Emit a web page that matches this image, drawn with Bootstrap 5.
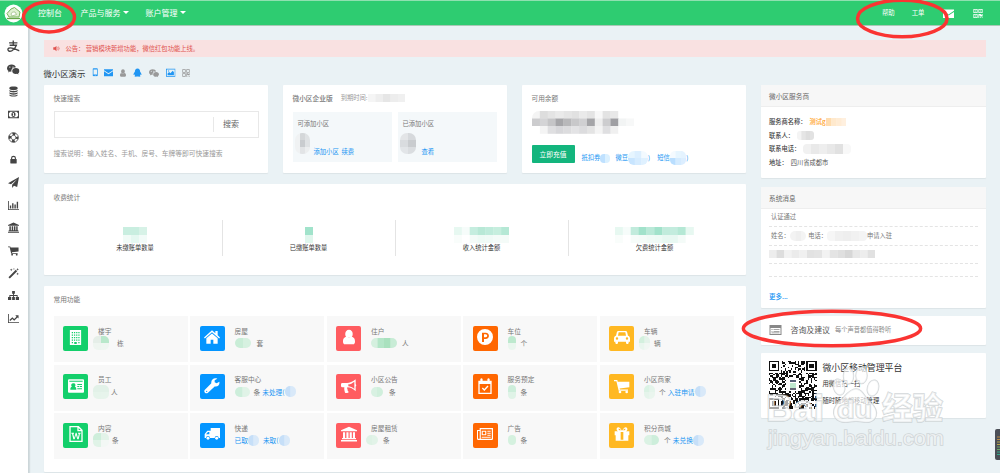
<!DOCTYPE html>
<html lang="en">
<head>
<meta charset="utf-8">
<meta name="viewport" content="width=device-width, initial-scale=1">
<title>微小区演示</title>
<link rel="stylesheet" href="https://cdn.jsdelivr.net/npm/bootstrap@5.3.0/dist/css/bootstrap.min.css">
<style>
body{height:473px;overflow:hidden;background:#eaf2f5;font-family:"Noto Sans CJK SC",sans-serif;font-size:6.7px;line-height:10px;color:#777;position:relative;white-space:nowrap}
a.lk,a.lk:hover{color:#2196f3;text-decoration:none}
svg{display:block;flex:none}
.ic{width:11px;height:11px;fill:currentColor}
.topbar{height:26px;background:#2ecc71;border-top:1px solid #8fe0b0;border-bottom:1px solid #a9c9b6;padding:0;color:#fff;font-size:8px;line-height:12px}
.topbar .brand-pic{width:19px;height:19px;margin-left:4px}
.topbar .nav-entry{color:#fff;text-decoration:none;margin-top:-1px}
.topbar .right-nav{font-size:6.4px;margin-left:auto;padding-right:17px}
.caret{border:3px solid transparent;border-top:3px solid #fff;border-bottom:0;display:inline-block;margin-left:2px;vertical-align:1.5px}
.side{width:29px;height:447px;background:#fff;border-right:1px solid #ccd6d9;box-shadow:1px 0 1px #d4dde0;padding-top:9px;color:#444;flex:none}
.side div{height:22.7px;display:flex;align-items:center;justify-content:center;padding-right:1px}
.content{padding:14px 14px 0 14.5px;min-width:0}
.notice{height:17px;background:#f9e1e1;color:#e0524e;font-size:6.3px;padding:0 0 0 9px;margin:0;border:0;border-radius:0}
.site-title{height:14px;margin:8.5px 0 5.5px;color:#333;font-size:8.4px;line-height:14px}
.card{border:0;border-radius:1px;box-shadow:0 1px 1px #dce4e7;color:inherit}
.left-col{width:702px;flex:none}
.right-col{width:225px;flex:none}
.h-top{height:88px}
.card.pad{padding:8px 10px 0}
.search-box{height:27px;border:1px solid #e8e8e8;margin-top:8px;width:205px;font-size:8px;color:#666}
.search-box span{border-left:1px solid #e8e8e8;height:15px;line-height:14px;width:45px;padding-left:9.5px}
.quota{height:50px;width:99.5px;background:#f4f8fa;padding:7px 0 0 5px;margin-top:9px}
.quota .links{color:#2196f3;font-size:6.3px}
.recharge{background:#13b57d;color:#fff;border-radius:1px;width:43px;height:18px;padding:0;font-size:6.8px;line-height:18px;border:0}
.recharge:hover{background:#13b57d;color:#fff}
.stats{height:91px}
.stat-row{margin:18px -5px 0;height:36px}
.stat-row>div{width:173.2px;padding-top:7px;color:#333;font-size:6.25px;border-left:1px solid #e4e4e4}
.stat-row>div:first-child{border-left:0}
.stat-row svg{margin:0 auto}
.funcs{height:186px}
.fgrid{display:grid;grid-template-columns:repeat(5,134.4px);gap:2.5px 2.15px;margin-top:12px}
.fcell{height:46px;background:#f8f8f8;padding:9.5px 0 0 9.7px;color:#777}
.tile{width:25px;height:25px;border-radius:2px;color:#fff;margin-right:9.8px;padding-bottom:2px;flex:none}
.tile .ic{width:16px;height:16px}
.g{background:#13cf6b}.b{background:#0495ff}.r{background:#ff5c60}.o{background:#ff6701}.y{background:#ffb822}
.fcell .line2{height:14px;margin-top:.5px;margin-left:-5px}
.card .head-bar{height:22px;background:#f7f7f7;border-bottom:1px solid #eee;padding:6px 8px;color:#666}
.info{padding:8px 8px 0;font-size:6.25px;color:#555}
.info>div{height:13.8px}
.info b{color:#444;font-weight:500;margin-right:3px}
.msgs{padding:0 8px;font-size:6.25px}
.msgs>div{border-bottom:1px dashed #e4e4e4;height:18.6px;padding-left:2px}
.qr{width:47.5px;height:47.5px}
.over{position:absolute;left:0;top:0;pointer-events:none}
.meter{position:absolute;right:0;top:429px}
</style>
</head>
<body>
<svg width="0" height="0" class="position-absolute">
<symbol id="alipay" viewBox="0 0 24 24"><path d="M4 5.500h16M12 1v9M5 10h13c-2 6-5 9-9 11-5 2-8-1-7-4 2-4 12-1 22 4" fill="none" stroke="currentColor" stroke-width="2.600"/></symbol>
<symbol id="wechat" viewBox="0 0 24 24"><path fill-rule="evenodd" d="M9 3C4 3 0 6 0 10c0 2 1 4 3 5.300L2 18l3.500-1.600 3 .6C7.500 12 11 8.500 17 8.200 16 5 13 3 9 3zM5.500 6.500a1.200 1.200 0 1 1 0 2.500 1.200 1.200 0 0 1 0-2.500zm6 0a1.200 1.200 0 1 1 0 2.500 1.200 1.200 0 0 1 0-2.500zM17 9.500c-4 0-7 2.500-7 5.800S13 21 17 21l2.300-.4L22 22l-.7-2.300c1.700-1 2.700-2.700 2.700-4.500 0-3.200-3-5.700-7-5.700z"/></symbol>
<symbol id="db" viewBox="0 0 24 24"><path d="M3 4c0-4 18-4 18 0v2c0 4-18 4-18 0zM3 8.500c3 3 15 3 18 0V11c0 4-18 4-18 0zM3 13.500c3 3 15 3 18 0V16c0 4-18 4-18 0zM3 18.500c3 3 15 3 18 0V20c0 4-18 4-18 0z"/></symbol>
<symbol id="money" viewBox="0 0 24 24"><path fill-rule="evenodd" d="M0 4h24v16H0zM2 9v6l3 3h14l3-3V9l-3-3H5zm10-2.500c6 0 6 11 0 11s-6-11 0-11zM10 9v1.500h1V14h-1v1.500h4V14h-1V8.500z"/></symbol>
<symbol id="ring" viewBox="0 0 24 24"><circle cx="12" cy="12" r="10.500" fill="none" stroke="currentColor" stroke-width="1.700"/><circle cx="12" cy="12" r="5" fill="none" stroke="currentColor" stroke-width="1.500"/><circle cx="12" cy="12" r="7.800" fill="none" stroke="currentColor" stroke-width="5.500" stroke-dasharray="6.250 6" stroke-dashoffset="3.100"/></symbol>
<symbol id="lock" viewBox="0 0 24 24"><path d="M7 11V8c0-6 10-6 10 0v3" fill="none" stroke="currentColor" stroke-width="3"/><rect x="3.500" y="10.500" width="17" height="12" rx="1"/></symbol>
<symbol id="plane" viewBox="0 0 24 24"><path d="M24 0 20 22l-7-3-4 5v-7L20 5 6.500 16 0 13.500z"/></symbol>
<symbol id="bars" viewBox="0 0 24 24"><path d="M0 2h1.800v18H24v2H0zM4 12h3v6.500H4zM9 7h3v11.500H9zM14 10h3v8.500h-3zM19 4h3v14.500h-3z"/></symbol>
<symbol id="bank" viewBox="0 0 24 24"><path d="M12 1 24 6.500V8H0V6.500zM3 9.500h3.200V18h1.900V9.500h3.200V18h1.700V9.500h3.200V18h1.700V9.500H21V18h1.500v2h-21v-2H3zM0 21h24v2.200H0z"/></symbol>
<symbol id="cart" viewBox="0 0 24 24"><path d="M0 3h5l.6 2.500H23V14L8.500 15.700l.4 1.600H21v2H7L3.600 5H0z"/><circle cx="9" cy="21" r="2"/><circle cx="19" cy="21" r="2"/></symbol>
<symbol id="wand" viewBox="0 0 24 24"><path d="M1 20 17 4l3 3L4 23zM7 1l.8 2.200L10 4l-2.200.8L7 7l-.8-2.200L4 4l2.200-.8zM21 10l.8 2.200 2.200.8-2.200.8L21 16l-.8-2.200L18 13l2.200-.8zM21 0l.8 2.200L24 3l-2.200.8L21 6l-.8-2.200L18 3l2.200-.8zM13 0l.5 1.500L15 2l-1.500.5L13 4l-.5-1.500L11 2l1.500-.5z"/></symbol>
<symbol id="tree" viewBox="0 0 24 24"><path d="M9 2h6v6h-2v3h8v4h3v7h-7v-7h2v-2h-6v2h2v7H9v-7h2v-2H5v2h2v7H0v-7h3v-4h8V8H9z"/></symbol>
<symbol id="trend" viewBox="0 0 24 24"><path d="M0 2h1.800v18H24v2H0zM16 5h7v7l-2.300-2.300-7.200 7.300-4-4L5 17.500 3 15.500l6.500-6.500 4 4 5-5z"/></symbol>
<symbol id="phone" viewBox="0 0 24 24"><path fill-rule="evenodd" d="M7 1h10q2 0 2 2v18q0 2-2 2H7q-2 0-2-2V3q0-2 2-2zm0 3v14h10V4zm4 15.500v1.800h2v-1.800z"/></symbol>
<symbol id="mail" viewBox="0 0 24 24"><path d="M0 3h24v3l-12 8L0 6zM0 8.500l12 8 12-8V22H0z"/></symbol>
<symbol id="person" viewBox="0 0 24 24"><path d="M12 1c7 0 7 11 2.500 12h-5C5 12 5 1 12 1zM8 12q4 3 8 0c4 0 5 4 5 7 0 2-1 4-3 4H6c-2 0-3-2-3-4 0-3 1-7 5-7z"/></symbol>
<symbol id="qq" viewBox="0 0 24 24"><path d="M12 1c5 0 7 4 7 9 2 2 4 6 3.500 8.500-.5.8-1.500-.5-2.300-1.700-.4 1.300-1 2.200-1.700 3 3 1.500 1.500 3.200-2 3.200-2 0-3.500-.5-4.500-.5-1 0-2.500.5-4.500.5-3.500 0-5-1.700-2-3.200-.7-.8-1.300-1.700-1.700-3C3 18 2 19.300 1.500 18.500 1 16 3 12 5 10c0-5 2-9 7-9z"/></symbol>
<symbol id="pic" viewBox="0 0 24 24"><path fill-rule="evenodd" d="M0 2h24v20H0zM2 4v16h20V4zM4 18v-4l4-4 3 3 6-6 3 4v7zM5 6h3v3H5z"/></symbol>
<symbol id="qrs" viewBox="0 0 24 24"><path fill-rule="evenodd" d="M1 1h10v10H1zm2 2v6h6V3zm2 2h2v2H5zM13 1h10v10H13zm2 2v6h6V3zm2 2h2v2h-2zM1 13h10v10H1zm2 2v6h6v-6zm2 2h2v2H5zM13 13h6v2h2v-2h2v6h-6v-2h-2v6h-2zM17 21h2v2h-2zM21 21h2v2h-2z"/></symbol>
<symbol id="horn" viewBox="0 0 24 24"><path d="M1 8h5l6-5v18l-6-5H1z"/><path d="M15 8q4 4 0 8M18 5q7 7 0 14" fill="none" stroke="currentColor" stroke-width="2"/></symbol>
<symbol id="build" viewBox="0 0 24 24"><path fill-rule="evenodd" d="M3 0h18v24H3zM6 3v2h2V3zm3.500 0v2h2V3zm3.500 0v2h2V3zm3.500 0v2h2V3zM6 7v2h2V7zm3.500 0v2h2V7zM13 7v2h2V7zm3.500 0v2h2V7zM6 11v2h2v-2zm3.500 0v2h2v-2zm3.500 0v2h2v-2zm3.500 0v2h2v-2zM6 15v2h2v-2zm3.500 0v2h2v-2zm3.500 0v2h2v-2zm3.500 0v2h2v-2zM6 19v2h2v-2zm4 0v3.500h4V19zm6.500 0v2h2v-2z"/></symbol>
<symbol id="home" viewBox="0 0 24 24"><path d="M12 2l5 4.500V3h3.500v6.500L24 12.700l-1.300 1.500L12 5 1.300 14.200 0 12.700zM12 6.800l8.500 7.200v8H14v-6h-4v6H3.500v-8z"/></symbol>
<symbol id="idcard" viewBox="0 0 24 24"><path fill-rule="evenodd" d="M1.500 2h21Q24 2 24 3.500v17q0 1.500-1.500 1.500h-21Q0 22 0 20.500v-17Q0 2 1.500 2zM2 4v1.500h20V4zm1.500 13.500h9c0-3-1-4-2.300-4.300 2-2.200 1-5.200-2.200-5.200s-4.200 3-2.200 5.200c-1.300.3-2.300 1.300-2.300 4.300zM14 9v1.500h7V9zm0 3v1.500h3V12zm4 0v1.500h3V12zm-4 3.500V17h7v-1.500z"/></symbol>
<symbol id="wrench" viewBox="0 0 24 24"><path fill-rule="evenodd" d="M23 5.500 19 8l-3-1.500V3.500L20 1c-5-2-10 1.500-9 7L1 18c-2 3 2 6.500 5 4L16 12.700c5 1 8-3 7-7.200zM4 19a1 1 0 1 1 0 2 1 1 0 0 1 0-2z"/></symbol>
<symbol id="bull" viewBox="0 0 24 24"><path fill-rule="evenodd" d="M22 2v7q2 2 0 4v7c-4-4-8-6-12.500-6-1 2 1 3 .5 5 1 .6.700 1 1.700 2-1.300 2-4.200 2-5.700 1-.7-2.500-1.500-5-1-8H2q-2 0-2-2V9.500q0-2 2-2h7C13 7.500 17 6 22 2zM20 5.500c-3 2.500-6 3.700-9 4v3c3 .3 6 1.600 9 4z"/></symbol>
<symbol id="word" viewBox="0 0 24 24"><path fill-rule="evenodd" d="M2 0h14l6 6v18H2zm2 2v20h16V8h-6V2zm12 1v3h3zM5 10h4v1.500H8l1.300 6L11.500 10h1.400l2 7.500 1.300-6H15V10h4v1.500h-1L16 20h-2l-2-6.500L10 20H8L6 11.500H5z"/></symbol>
<symbol id="truck" viewBox="0 0 24 24"><path fill-rule="evenodd" d="M10 3h14v15h-2a3 3 0 0 0-6 0H9a3 3 0 0 0-6 0H1V12l4-5h5zM8 9H6l-3 3.500h5z"/><circle cx="6" cy="18.500" r="2.200"/><circle cx="19" cy="18.500" r="2.200"/></symbol>
<symbol id="park" viewBox="0 0 24 24"><path fill-rule="evenodd" d="M12 0a12 12 0 1 1 0 24 12 12 0 0 1 0-24zM7.500 5.500v14h3V15H13c6.500 0 6.500-9.500 0-9.500zm3 2.500H13c3 0 3 4.500 0 4.500h-2.500z"/></symbol>
<symbol id="cal" viewBox="0 0 24 24"><path fill-rule="evenodd" d="M2 4h3V1.500q1.700-2 3.400 0V4h7.200V1.500q1.700-2 3.400 0V4h3v20H2zm2 5v13h16V9z"/><path d="m8 15 3 3 5.500-6" fill="none" stroke="currentColor" stroke-width="2"/></symbol>
<symbol id="news" viewBox="0 0 24 24"><path fill-rule="evenodd" d="M4 3h20v16q0 2-2 2H2q-2 0-2-2V6h4zm1.700 1.700V19h16.500V4.700zM1.500 7.500V19H4V7.500zM7 7h7v7H7zm1.700 1.700v3.600h3.600V8.700zM15.500 7h5v1.500h-5zm0 3h5v1.500h-5zm0 3h5v1.500h-5zM7 16h13.500v1.500H7z"/></symbol>
<symbol id="car" viewBox="0 0 24 24"><path fill-rule="evenodd" d="M7 3h10c2 0 2.500 1 3 3l1 4c2 .5 3 2 3 4v5h-2v1.500c0 2.500-4 2.500-4 0V19H6v1.500c0 2.500-4 2.500-4 0V19H0v-5c0-2 1-3.500 3-4l1-4c.5-2 1-3 3-3zm0 2L6 10h12l-1-5zM4.500 12.500a1.800 1.800 0 1 0 0 3.600 1.800 1.800 0 0 0 0-3.600zm15 0a1.800 1.800 0 1 0 0 3.600 1.800 1.800 0 0 0 0-3.600z"/></symbol>
<symbol id="gift" viewBox="0 0 24 24"><path fill-rule="evenodd" d="M1 8h7C1 8 4-1 9 3l3 4 3-4c5-4 8 5 1 5h7v6h-1.500v8h-19v-8H1zm7-1.800h2.500C8 2.500 5 4 8 6.200zm8 0c3-2.200 0-3.700-2.500 0zM10 9v11.500h4V9z"/></symbol>
<symbol id="board" viewBox="0 0 24 24"><path fill-rule="evenodd" d="M0 2h24v20H0zM2 8v12h20V8zM4 10h2v2H4zm4 0h12v1.500H8zM4 14h2v1.500H4zm4 0h12v1.500H8zM4 17h16v1.500H4z"/></symbol>
</svg>

<nav class="topbar navbar navbar-expand flex-nowrap align-items-center justify-content-start">
  <svg class="brand-pic" viewBox="0 0 19 19"><circle cx="9.500" cy="9.500" r="9" fill="#fff"/><path d="M3 9.500 7 5l3.500-1.500L16 8l-1 5H5z" fill="#dff0d2" stroke="#77b55a" stroke-width="1"/><path d="M7 10q1-3 4-2l1.500 2.500L8 12z" fill="#fff" stroke="#91b877" stroke-width=".7"/><path d="M3 14.500h13" stroke="#67a647" stroke-width="1.300"/></svg>
  <a class="nav-entry" style="margin-left:15px">控制台</a>
  <a class="nav-entry" style="margin-left:18.500px">产品与服务<i class="caret"></i></a>
  <a class="nav-entry" style="margin-left:17px">账户管理<i class="caret"></i></a>
  <div class="right-nav d-flex align-items-center">
    <a class="nav-entry">帮助</a><a class="nav-entry" style="margin-left:17px">工单</a>
    <svg class="ic" style="margin-left:18.500px"><use href="#mail"/></svg><svg class="ic" style="margin-left:19px;width:10px"><use href="#qrs"/></svg>
  </div>
</nav>

<div class="d-flex">
  <aside class="side" id="side"></aside>
  <main class="content flex-grow-1">
    <div class="notice alert d-flex align-items-center"><svg class="ic" style="width:7px;height:7px;margin-right:6px"><use href="#horn"/></svg>公告：&nbsp;营销模块新增功能，微信红包功能上线。</div>
    <div class="site-title d-flex align-items-center">微小区演示
      <div class="d-flex align-items-center" id="badges"></div>
    </div>
    <div class="d-flex justify-content-between">
      <div class="left-col">
        <div class="d-flex justify-content-between">
          <section class="card pad h-top" style="width:224px">
            <div>快速搜索</div>
            <div class="search-box d-flex justify-content-end align-items-center"><span>搜索</span></div>
            <div style="margin-top:9.500px;color:#999;font-size:6.780px">搜索说明：输入姓名、手机、房号、车牌等即可快速搜索</div>
          </section>
          <section class="card pad h-top" style="width:224px">
            <div class="d-flex align-items-center"><span class="fw-medium">微小区企业版</span><span style="margin-left:8px;font-size:6.300px;color:#999">到期时间:</span><i class="mz" data-c="f5f5f5,eeeeee,e6e6e6,ededed,f0f0f0" data-w="7.500" data-h="8"></i></div>
            <div class="d-flex justify-content-between" style="width:204.500px">
              <div class="quota"><div style="font-size:6.300px">可添加小区</div>
                <div class="d-flex align-items-center" style="margin-left:-3px"><i class="mz" data-c="f0f2f3,d4d7d9,dfe2e4/f0f2f3,c9cccf,dfe2e4/f0f2f3,e2e4e6,eceeef" data-w="5" data-h="7" data-r="7"></i><span class="links" style="padding-top:18px;margin-left:4px">添加小区&nbsp; 续费</span></div></div>
              <div class="quota"><div style="font-size:6.300px">已添加小区</div>
                <div class="d-flex align-items-center" style="margin-left:-3px"><i class="mz" data-c="e3e5e7,d6d9dc/d9dcdf,c9cccf/e2e5e8,dadde0" data-w="8" data-h="7" data-r="7"></i><span class="links" style="padding-top:18px;margin-left:6px">查看</span></div></div>
            </div>
          </section>
          <section class="card pad h-top" style="width:224px">
            <div>可用余额</div>
            <div style="margin-top:8px"><i class="mz" data-c="f4f4f4,dddddd,e4e4e4,eaeaea,e5e5e5,e1e1e1,eaeaea,e4e4e4,f8f8f8,e3e3e3,e8e8e8,ffffff,ffffff/ccccce,d4d4d6,c5c5c7,a6a6a9,b8b8ba,c8c8ca,d0d0d2,a5a5a8,eeeeee,cdcdcf,9f9fa3,f2f4f4,f7f8f8/ffffff,f4f4f4,dfdfe1,d7d7da,dcdcde,e3e3e5,dcdcde,e4e4e4,f4f4f4,dfdfe1,f0f0f0,ffffff,ffffff" data-w="7.850" data-h="7.500" data-r="7"></i></div>
            <div class="d-flex" style="margin-top:11.500px"><button class="btn recharge">立即充值</button>
              <div class="d-flex align-items-center" style="margin:6px 0 0 7px;font-size:6.300px;color:#2196f3">抵扣券<i class="mz" data-c="bfe1ff,daf0ff" data-w="5" data-h="9" data-r="4"></i><span style="margin-left:5px">微豆</span><i class="mz" data-c="e6f5ff,dcefff,f3faff/c8e5ff,d6ecff,dff1ff" data-w="6.700" data-h="7" data-r="6"></i>)<span style="margin-left:7px">短信</span><i class="mz" data-c="f4faff,e6f5ff,e4f3ff/b9deff,d4ebff,dceeff" data-w="5.500" data-h="7" data-r="5"></i>)</div></div>
          </section>
        </div>
        <section class="card pad stats" style="margin-top:11px">
          <div>收费统计</div>
          <div class="stat-row d-flex text-center">
            <div><i class="mz" data-c="c9eee0,c9eee0,d7f2e7/f1fbf7,e5f8f1,f2fbf8" data-w="8" data-h="8"></i><div>未缴账单数量</div></div>
            <div><i class="mz" data-c="a1e3cb/e0f6ed" data-w="8" data-h="8"></i><div>已缴账单数量</div></div>
            <div><i class="mz" data-c="e7f8f1,f6fcfa,c5eddf,b8e8d6,bfebdb,c6eede,b5e8d5/f9fdfb,ffffff,f4fbf8,eefaf5,f0faf6,f4fbf8,f4fbf8" data-w="7.850" data-h="8"></i><div>收入统计金额</div></div>
            <div><i class="mz" data-c="e7f8f1,f6fcfa,c1ebdc,a2e2cb,bae9d8,a2e2cb,c1ebdc,c3ecde,b5e8d5,e7f8f1/f9fdfb,ffffff,f6fcf9,f4fbf8,f0faf6,eefaf5,e8f8f2,e8f8f2,f4fbf8,ffffff" data-w="7.850" data-h="8"></i><div>欠费统计金额</div></div>
          </div>
        </section>
        <section class="card pad funcs" style="margin-top:11px">
          <div>常用功能</div>
          <div class="fgrid" id="fgrid"></div>
        </section>
      </div>
      <div class="right-col">
        <section class="card" style="height:93px">
          <div class="head-bar">微小区服务商</div>
          <div class="info">
            <div class="d-flex align-items-center"><b>服务商名称：</b><span style="color:#ff9e1b;font-weight:500">测试g</span><i class="mz" data-c="ffdcae,ffe9cd,ffecd5,fff0df" data-w="5.200" data-h="8"></i></div>
            <div class="d-flex align-items-center"><b>联系人：</b><i class="mz" data-c="f4f4f4,e5e5e5,dedede,e2e2e2" data-w="4.300" data-h="9" data-r="3"></i></div>
            <div class="d-flex align-items-center"><b>联系电话：</b><i class="mz" data-c="f1f1f1,e9e9e9,eeeeee,e8e8e8,e1e1e1,f8f8f8" data-w="8" data-h="10" data-r="4"></i></div>
            <div class="d-flex align-items-center"><b>地址：</b>四川省成都市</div>
          </div>
        </section>
        <section class="card" style="height:121px;margin-top:8.500px">
          <div class="head-bar">系统消息</div>
          <div class="msgs">
            <div class="d-flex align-items-center">认证通过</div>
            <div class="d-flex align-items-center">姓名：<i class="mz" data-c="f3f3f3,efefef,f4f4f4" data-w="5.500" data-h="10" data-r="5"></i><span style="margin-left:2px">电话：</span><i class="mz" data-c="f6f6f6,f0f0f0,eeeeee,f1f1f1,f4f4f4" data-w="8" data-h="10" data-r="4"></i>申请入驻</div>
            <div class="d-flex align-items-center" style="padding:0"><i class="mz" data-c="ededed,dddddd,f2f2f2,ebebeb,f0f0f0,e2e2e2,e4e4e4,f2f2f2,e4e4e4,dfdfdf,d7d7d7,e8e8e8,ededed,e1e1e1" data-w="7.600" data-h="8"></i></div>
            <div style="height:12.500px"></div>
          </div>
          <a class="lk fw-medium" style="margin:14px 0 0 8px;font-size:6.500px">更多...</a>
        </section>
        <section class="card flex-row align-items-center" style="height:29px;margin-top:8px;padding-left:8px">
          <svg class="ic" style="width:13px;height:12px;color:#888"><use href="#board"/></svg>
          <span style="font-size:7.900px;margin-left:8.500px;margin-top:-1px;color:#555">咨询及建议</span><span style="font-size:6.250px;margin-left:5px;color:#888">每个声音都值得聆听</span>
        </section>
        <section class="card flex-row" style="height:65px;margin-top:8px;padding:8.500px 8px">
          <svg class="qr" id="qr" viewBox="0 0 33 33" shape-rendering="crispEdges"></svg>
          <div style="margin-left:6px;color:#333"><div style="font-size:8.900px;line-height:12px;margin-top:1px">微小区移动管理平台</div><div style="margin-top:5px;font-size:6.300px">用微信扫一扫</div><div style="margin-top:6.500px;font-size:6.300px">随时随地都移动管理</div></div>
        </section>
      </div>
    </div>
  </main>
</div>

<svg class="over" width="1000" height="473" viewBox="0 0 1000 473">
  <g fill="#fff" fill-opacity=".65" stroke="#c4cacc" stroke-opacity=".75" stroke-width="1.500" paint-order="stroke" font-family="Liberation Sans,sans-serif">
    <ellipse cx="839" cy="387" rx="5.500" ry="8" transform="rotate(-15 839 387)"/><ellipse cx="848.500" cy="376" rx="5" ry="8"/><ellipse cx="861.500" cy="375.500" rx="5.500" ry="8"/><ellipse cx="873" cy="388" rx="5.500" ry="8" transform="rotate(15 873 388)"/>
    <path d="M856 389c6 0 8 7 13 12 13 11 7 23-5 21-6-1-10-1-16 0-13 2-20-10-8-21 5-4 9-12 16-12z"/>
    <text x="766" y="420.500" font-size="37" font-weight="700" textLength="58" lengthAdjust="spacingAndGlyphs">Bai</text>
    <text x="837" y="418" font-size="24" font-weight="700" textLength="35" lengthAdjust="spacingAndGlyphs">du</text>
    <text x="882" y="419" font-size="31" font-weight="700" font-family="Noto Sans CJK SC,sans-serif" textLength="61" lengthAdjust="spacingAndGlyphs">经验</text>
    <text x="768" y="444.500" font-size="21" stroke-width="1.500" textLength="176" lengthAdjust="spacingAndGlyphs">jingyan.baidu.com</text>
  </g>
  <g fill="none" stroke="#fa3432" stroke-width="3.500">
    <ellipse cx="49" cy="17" rx="25.500" ry="15"/>
    <ellipse cx="902.300" cy="18.500" rx="44.800" ry="18.300"/>
    <ellipse cx="832" cy="328.500" rx="88.600" ry="17.300"/>
  </g>
</svg>
<svg class="meter" width="5" height="31" viewBox="0 0 5 31"><rect width="8" height="31" rx="2" fill="#4b4f57"/><path d="M2 8h3M2 10.500h3" stroke="#b98a45"/><path d="M2 13h3M2 15.500h3" stroke="#b5a44a"/><path d="M2 18h3M2 20.500h3" stroke="#6da667"/><path d="M2 23h3M2 25.500h3" stroke="#35a98c"/></svg>

<script>
const use = (n, css = '') => `<svg class="ic" style="${css}"><use href="#${n}"/></svg>`;
document.getElementById('side').innerHTML = ['alipay','wechat','db','money','ring','lock','plane','bars','bank','cart','wand','tree','trend'].map((n, i) => `<div>${use(n, i < 2 ? 'width:12.5px;height:12.5px' : i === 5 ? 'width:9px;height:9px' : '')}</div>`).join('');

// name, colour, horizontal centre, size
let edge = 85.5;
document.getElementById('badges').innerHTML = [['phone','#2196f3',95,8.5],['mail','#2196f3',108.5,9],['person','#999',123.5,8],['qq','#2196f3',138,9],['wechat','#999',154.5,10],['pic','#2196f3',171,9.5],['qrs','#999',186.5,8]].map(([n, c, x, s]) => {
  const gap = x - s / 2 - edge; edge = x + s / 2;
  return use(n, `color:${c};width:${s}px;height:${s}px;margin-left:${gap}px`);
}).join('');

// icon, tile colour, title, hidden value blocks, block width, unit, gap before unit, link
const cells = [
  ['build','g','楼宇','e5eee8,b9e8cb/eef5f0,eff6f1',8,'栋',8],['home','b','房屋','c9edd7,d6f1e0',8,'套',6],['person','r','住户','d5f0df,b4e6c8,a9e1be,c8ecd6',6.5,'人',5],['park','o','车位','bde9ce/e9f6ee',8,'个',5],['car','y','车辆','d3f0de,e4f3ea/e9f6ee,f1f7f3',5.5,'辆',4],
  ['idcard','g','员工','e2f1e8,e2f1e8/e6f4eb,e7f4ec',8,'人',2],['wrench','b','客服中心','cdeedb,e0f3e7',7.5,'条',4,'未处理('],['bull','r','小区公告','d8f1e2,d0efdc',6,'条',6],['cal','o','服务预定','cdeedb,cdeedb/dff3e7,dff3e7',4,'条',5],['cart','y','小区商家','dbf2e4,e5f4eb/e5f4eb,eaf5ee',5.5,'个',4,'入驻申请'],
  ['word','g','内容','ceeedb,e3f3e9/e0f3e7,f3f8f5',8,'条',3],['truck','b','快递','',0,'',0],['bank','r','房屋租赁','def2e5,e2f3e8',6,'条',5],['news','o','广告','d5f1df,d5f1df',4,'条',5],['gift','y','积分商城','dbf2e4,cdeedb',7.5,'个',5,'未兑换']
];
document.getElementById('fgrid').innerHTML = cells.map(([ic, c, t, m, w, u, gap, link]) => {
  const h = m.includes('/') ? 7 : 10;
  const blob = `<i class="mz" data-c="c6dff8,d9e9f9" data-w="5.5" data-h="11" data-r="5"></i>`;
  const pad = 'build idcard word bank'.includes(ic) ? 0 : 5;
  const line = ic === 'truck'
    ? `<a class="lk" style="margin-left:5px">已取</a>${blob}<a class="lk" style="margin-left:4px">未取(</a>${blob}`
    : `<span style="margin-left:${pad}px"></span><i class="mz" data-c="${m}" data-w="${w}" data-h="${h}" data-r="5"></i><span style="margin-left:${gap}px">${u}</span>${link ? `<a class="lk" style="margin-left:2px">${link}</a>${blob}` : ''}`;
  return `<div class="fcell d-flex"><div class="tile ${c} d-flex align-items-center justify-content-center">${use(ic, ic === 'build' ? 'width:15px;height:15px' : '')}</div><div><div>${t}</div><div class="line2 d-flex align-items-center">${line}</div></div></div>`;
}).join('');

// hidden values become blocks of flat colour
document.querySelectorAll('.mz').forEach(el => {
  const rows = el.dataset.c.split('/').map(r => r.split(','));
  const w = +el.dataset.w, h = +el.dataset.h, W = w * rows[0].length, H = h * rows.length;
  const rects = rows.map((r, y) => r.map((c, x) => `<rect x="${x * w}" y="${y * h}" width="${w + .3}" height="${h + .3}" fill="#${c}"/>`).join('')).join('');
  el.outerHTML = `<svg width="${W}" height="${H}" style="border-radius:${el.dataset.r || 0}px">${rects}</svg>`;
});

// 33 x 33 code with three finder squares
let seed = 29, out = '';
const dot = (x, y, w, h, f) => out += `<rect x="${x}" y="${y}" width="${w}" height="${h}" fill="${f}"/>`;
dot(0, 0, 33, 33, '#fff');
for (let y = 0; y < 33; y++) for (let x = 0; x < 33; x++) {
  seed = (seed * 1103515245 + 12345) % 2147483648;
  if ((seed >> 16) % 100 < 52) dot(x, y, 1, 1, '#111');
}
[[0, 0], [26, 0], [0, 26]].forEach(([x, y]) => {
  dot(x - 1, y - 1, 9, 9, '#fff'); dot(x, y, 7, 7, '#111'); dot(x + 1, y + 1, 5, 5, '#fff'); dot(x + 2, y + 2, 3, 3, '#111');
});
dot(12, 12, 9, 9, '#fff'); dot(14.5, 13, 4, 1.5, '#555f77'); dot(14.5, 15.5, 4, 3, '#bfe8cf'); dot(14.5, 19, 4, 1, '#667');
document.getElementById('qr').innerHTML = out;
</script>
<script src="https://cdn.jsdelivr.net/npm/bootstrap@5.3.0/dist/js/bootstrap.bundle.min.js"></script>
</body>
</html>
